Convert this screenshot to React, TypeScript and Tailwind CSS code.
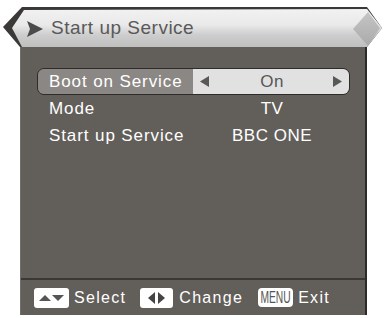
import React from "react";

const font = "font-['Liberation_Sans',Arial,sans-serif]";

function Row({ label, value, active }: { label: string; value: string; active?: boolean }) {
  if (active) {
    return (
      <div className="flex h-[27px] w-[313px] rounded-[7px] border border-[#2e2c2a] overflow-hidden">
        <div className="flex w-[155px] items-center bg-[#8b8784] pl-[11px] text-[17px] tracking-[0.9px] text-white">
          {label}
        </div>
        <div className="flex flex-1 items-center justify-between bg-[#e1e1e1] px-[7px] text-[17px] tracking-[0.5px] text-[#575757]">
          <svg width="9" height="11" viewBox="0 0 9 11"><path d="M9 0 L0 5.5 L9 11 Z" fill="#585858" /></svg>
          <span className="pl-[2px]">{value}</span>
          <svg width="9" height="11" viewBox="0 0 9 11"><path d="M0 0 L9 5.5 L0 11 Z" fill="#585858" /></svg>
        </div>
      </div>
    );
  }
  return (
    <div className="flex h-[27px] w-[313px] items-center text-[17px] tracking-[0.9px] text-white">
      <div className="w-[155px] pl-[12px]">{label}</div>
      <div className="flex-1 pl-[2px] text-center tracking-[0.5px]">{value}</div>
    </div>
  );
}

export default function App() {
  return (
    <div className={`h-[318px] w-[384px] bg-white ${font}`}>
      {/* title bar */}
      <div className="relative ml-[3px] mt-[7px] h-[40px] w-[379px]">
        <div className="absolute inset-0 bg-[#3b3937] [clip-path:polygon(19px_0,364px_0,379px_21px,364px_40px,17px_40px,0_20px)]" />
        <div className="absolute inset-0 bg-[linear-gradient(to_bottom,#f3f3f3_0%,#e9e9e9_45%,#cdcdcd_70%,#bfbfbf_100%)] [clip-path:polygon(21px_3px,364px_2px,379px_21px,364px_40px,19px_40px,9px_21px)]" />
        <div className="absolute inset-0 bg-[linear-gradient(to_bottom,#c9c9c9,#a9a9a9)] [clip-path:polygon(350px_22px,365px_5px,377px_21px,365px_39px)]" />
        <div className="relative flex h-full items-center gap-[8px] pl-[24px] pt-[3px]">
          <svg width="16" height="16" viewBox="0 0 16 16"><path d="M0 0 L16 8 L0 16 L3 8 Z" fill="#4b4b4b" /></svg>
          <span className="text-[19px] tracking-[0.5px] text-[#595959]">Start up Service</span>
        </div>
      </div>

      {/* panel */}
      <div className="ml-[20px] flex h-[268px] w-[347px] flex-col border-l border-r-2 border-l-[#736f6b] border-r-[#2d2b29] bg-[#625e5a]">
        <div className="flex flex-1 flex-col pl-[16px] pt-[21px]">
          <Row label="Boot on Service" value="On" active />
          <Row label="Mode" value="TV" />
          <Row label="Start up Service" value="BBC ONE" />
        </div>
        <div className="flex h-[37px] items-center border-t-2 border-t-[#3a3735] pl-[13px] text-[16px] tracking-[1.3px] text-white">
          <div className="flex h-[20px] w-[35px] items-center justify-center gap-[1px] rounded-[3px] bg-white">
            <svg width="12" height="6" viewBox="0 0 12 6"><path d="M0 6 L6 0 L12 6 Z" fill="#555" /></svg>
            <svg width="12" height="6" viewBox="0 0 12 6"><path d="M0 0 L12 0 L6 6 Z" fill="#555" /></svg>
          </div>
          <span className="ml-[5px]">Select</span>
          <div className="ml-[14px] flex h-[20px] w-[33px] items-center justify-center gap-[3px] rounded-[3px] bg-white">
            <svg width="7" height="12" viewBox="0 0 7 12"><path d="M7 0 L0 6 L7 12 Z" fill="#444" /></svg>
            <svg width="7" height="12" viewBox="0 0 7 12"><path d="M0 0 L7 6 L0 12 Z" fill="#444" /></svg>
          </div>
          <span className="ml-[6px]">Change</span>
          <div className="ml-[15px] flex h-[19px] w-[35px] items-center justify-center overflow-hidden rounded-[4px] bg-white">
            <span className="inline-block scale-x-[0.64] text-[16px] tracking-normal text-[#555]">MENU</span>
          </div>
          <span className="ml-[5px]">Exit</span>
        </div>
      </div>
    </div>
  );
}
